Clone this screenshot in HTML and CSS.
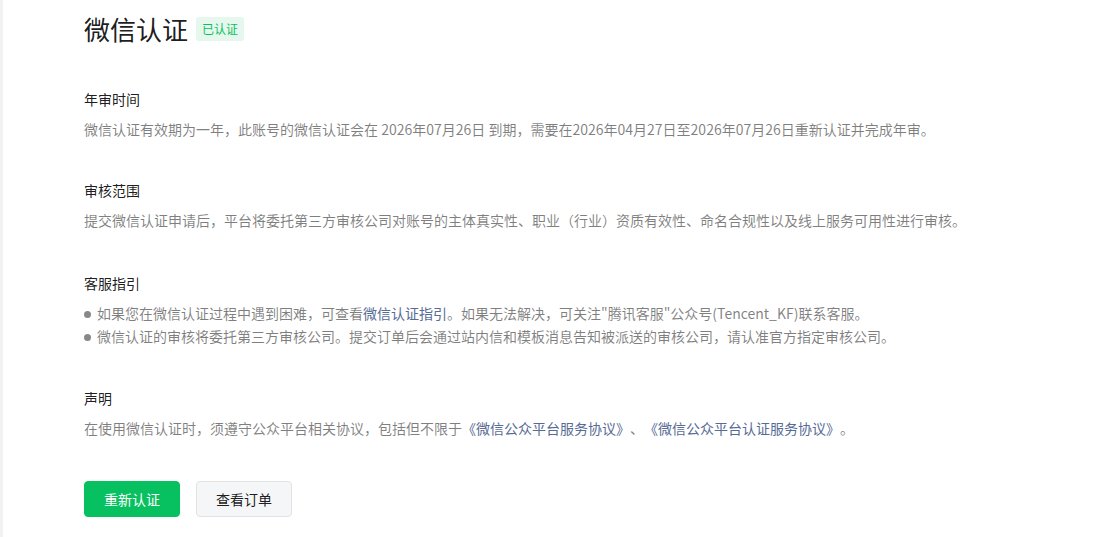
FILE: index.html
```html
<!DOCTYPE html>
<html lang="zh-CN">
<head>
    <meta charset="UTF-8">
    <meta name="viewport" content="width=device-width, initial-scale=1.0">
    <title>微信认证</title>
    <link rel="stylesheet" href="styles.css">
</head>
<body>

<div class="page">
    <div class="title-row">
        <h1 class="title">微信认证</h1>
        <span class="badge">已认证</span>
    </div>

    <div class="section section-first">
        <h3 class="section-title">年审时间</h3>
        <p class="desc">微信认证有效期为一年，此账号的微信认证会在 2026年07月26日 到期，需要在2026年04月27日至2026年07月26日重新认证并完成年审。</p>
    </div>

    <div class="section">
        <h3 class="section-title">审核范围</h3>
        <p class="desc">提交微信认证申请后，平台将委托第三方审核公司对账号的主体真实性、职业（行业）资质有效性、命名合规性以及线上服务可用性进行审核。</p>
    </div>

    <div class="section section-guide">
        <h3 class="section-title">客服指引</h3>
        <ul class="desc-list">
            <li>如果您在微信认证过程中遇到困难，可查看<a href="#" class="link">微信认证指引</a>。如果无法解决，可关注"腾讯客服"公众号(Tencent_KF)联系客服。</li>
            <li>微信认证的审核将委托第三方审核公司。提交订单后会通过站内信和模板消息告知被派送的审核公司，请认准官方指定审核公司。</li>
        </ul>
    </div>

    <div class="section">
        <h3 class="section-title">声明</h3>
        <p class="desc">在使用微信认证时，须遵守公众平台相关协议，包括但不限于<a href="#" class="link">《微信公众平台服务协议》</a>、<a href="#" class="link">《微信公众平台认证服务协议》</a>。</p>
    </div>

    <div class="actions">
        <button class="btn btn-primary">重新认证</button>
        <button class="btn btn-default">查看订单</button>
    </div>
</div>

</body>
</html>
```

FILE: styles.css
```css
body {
    margin: 0;
    font-family: "Noto Sans CJK SC", "Noto Sans", sans-serif;
    background-color: #fff;
    text-spacing-trim: space-all;
}
.page {
    min-height: 537px;
    border-left: 3px solid #f2f2f2;
    padding: 12px 0 0 81px;
    box-sizing: border-box;
}
.title-row {
    display: flex;
    align-items: center;
    gap: 8px;
}
.title {
    margin: 0;
    font-size: 26px;
    line-height: 34px;
    font-weight: 400;
    color: rgba(0, 0, 0, 0.9);
}
.badge {
    display: inline-block;
    height: 24px;
    line-height: 24px;
    padding: 0 6px;
    font-size: 12px;
    color: #07c160;
    background-color: #e6f8ed;
    border-radius: 3px;
}
.section {
    margin-top: 40px;
}
.section-first {
    margin-top: 43px;
}
.section-guide {
    margin-top: 42px;
}
.section-title {
    margin: 0 0 9px;
    font-size: 14px;
    line-height: 20px;
    font-weight: 400;
    color: rgba(0, 0, 0, 0.9);
}
.desc {
    margin: 0;
    font-size: 14px;
    line-height: 22px;
    color: rgba(0, 0, 0, 0.5);
}
.desc-list {
    margin: 0;
    padding: 0;
    list-style: none;
    font-size: 14px;
    line-height: 23px;
    color: rgba(0, 0, 0, 0.5);
}
.desc-list li::before {
    content: "";
    display: inline-block;
    width: 7px;
    height: 7px;
    margin: 0 6px 2px 0;
    border-radius: 50%;
    background-color: #888;
    vertical-align: middle;
}
.link {
    color: #576b95;
    text-decoration: none;
}
.actions {
    display: flex;
    gap: 16px;
    margin-top: 42px;
}
.btn {
    width: 96px;
    height: 36px;
    font-family: inherit;
    font-size: 14px;
    border-radius: 4px;
    cursor: pointer;
}
.btn-primary {
    background-color: #07c160;
    border: 1px solid #07c160;
    color: #fff;
}
.btn-default {
    background-color: #f5f6f7;
    border: 1px solid #e3e3e3;
    color: rgba(0, 0, 0, 0.9);
}
```
